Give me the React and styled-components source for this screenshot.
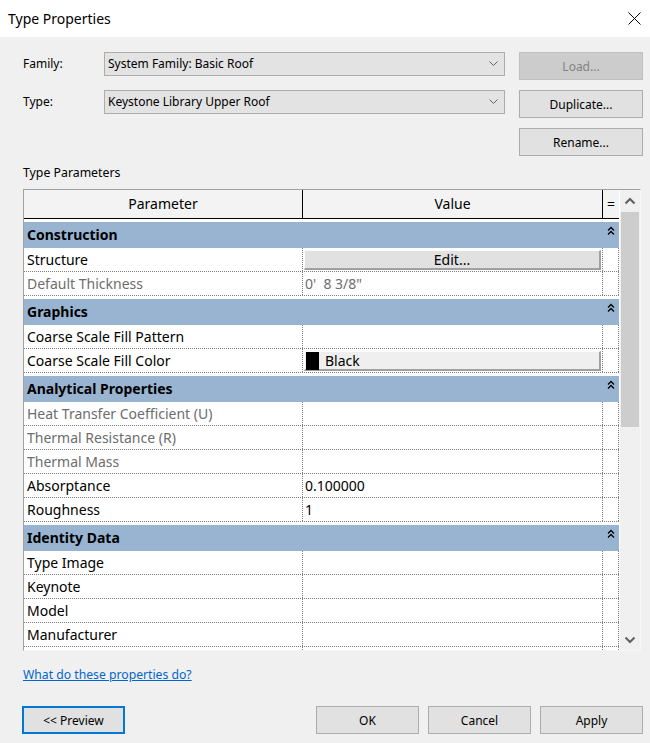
import React from 'react'
import styled, { createGlobalStyle, css } from 'styled-components'

const GlobalStyle = createGlobalStyle`
  html, body {
    margin: 0;
    padding: 0;
    background: #f0f0f0;
  }
  * { box-sizing: border-box; }
`

const UI_FONT = `"Noto Sans", "Open Sans", sans-serif`

const Dialog = styled.div`
  width: 650px;
  height: 743px;
  background: #f0f0f0;
  font-family: ${UI_FONT};
  color: #000;
  display: flex;
  flex-direction: column;
  overflow: hidden;
`

const TitleBar = styled.div`
  height: 37px;
  background: #fff;
  display: flex;
  align-items: center;
  justify-content: space-between;
  padding: 0 9px 0 8px;
  font-size: 14px;
  flex-shrink: 0;
`

const Body = styled.div`
  flex: 1;
  padding: 15px 7px 0 23px;
  display: flex;
  flex-direction: column;
`

const TopGrid = styled.div`
  display: grid;
  grid-template-columns: 81px 401px 1fr;
  grid-template-rows: 28px 28px 28px;
  row-gap: 10px;
  font-size: 12px;
`

const Label = styled.div`
  align-self: start;
  height: 24px;
  line-height: 23px;
`

const Combo = styled.div`
  align-self: start;
  height: 24px;
  background: #e3e3e3;
  border: 1px solid #adadad;
  display: flex;
  align-items: center;
  justify-content: space-between;
  padding: 0 6px 1px 3px;
`

const Btn = styled.button`
  font-family: ${UI_FONT};
  font-size: 12px;
  height: 28px;
  padding: 0;
  background: #e1e1e1;
  border: 1px solid #adadad;
  color: #000;
  ${({ disabled }) => disabled && css`
    background: #cccccc;
    border-color: #bfbfbf;
    color: #838383;
  `}
  ${({ primary }) => primary && css`
    border: 2px solid #0078d7;
  `}
`

const SideBtn = styled(Btn)`
  width: 124px;
  justify-self: end;
`

const SectionLabel = styled.div`
  font-size: 12.3px;
  line-height: 16px;
  margin-top: 9px;
`

const TableFrame = styled.div`
  margin-top: 8px;
  width: 618px;
  height: 462px;
  border: 1px solid #a0a0a0;
  border-right-color: #f6f6f6;
  border-bottom-color: #f6f6f6;
  display: flex;
  background: #fff;
`

const Grid = styled.div`
  width: 595px;
  height: 100%;
  overflow: hidden;
  font-size: 14px;
`

const HeaderRow = styled.div`
  display: grid;
  grid-template-columns: 279px 300px 16px;
  height: 29px;
  background: #f3f3f3;
  border-bottom: 1px solid #000;
`

const HeaderCell = styled.div`
  display: flex;
  align-items: center;
  justify-content: center;
  padding-bottom: 1px;
  ${({ divider }) => divider && css`border-right: 1px solid #000;`}
`

const Group = styled.div`
  margin-top: 3px;
  height: 26px;
  background: #99b4d1;
  display: flex;
  align-items: flex-start;
  justify-content: space-between;
  font-weight: 700;
`

const GroupTitle = styled.div`
  line-height: 25px;
  padding-left: 3px;
`

const GroupToggle = styled.div`
  width: 16px;
  display: flex;
  justify-content: center;
  padding-top: 4px;
`

const Row = styled.div`
  display: grid;
  grid-template-columns: 279px 300px 16px;
  height: 24px;
  border-bottom: 1px dotted #808080;
`

const Cell = styled.div`
  border-right: 1px dotted #808080;
  display: flex;
  align-items: center;
  padding-left: ${({ pad }) => pad ?? 3}px;
  padding-bottom: 1px;
  white-space: pre;
  overflow: hidden;
  color: ${({ muted }) => (muted ? '#6d6d6d' : '#000')};
`

const CellButton = styled.div`
  flex: 1;
  align-self: stretch;
  margin: 2px 1px 0 1px;
  background: ${({ light }) => (light ? '#efefef' : '#e1e1e1')};
  border-top: 1px solid #fcfcfc;
  border-left: 1px solid #fcfcfc;
  border-right: 2px solid #a0a0a0;
  border-bottom: 2px solid #a0a0a0;
  display: flex;
  align-items: center;
  justify-content: ${({ center }) => (center ? 'center' : 'flex-start')};
  gap: 6px;
  padding-left: ${({ center }) => (center ? 0 : 1)}px;
`

const Swatch = styled.span`
  width: 13px;
  height: 18px;
  background: #000;
`

const ScrollBar = styled.div`
  width: 21px;
  display: flex;
  flex-direction: column;
  background: #f0f0f0;
  border-left: 1px solid #fff;
`

const ScrollArrow = styled.div`
  height: 21px;
  display: flex;
  align-items: center;
  justify-content: center;
`

const ScrollTrack = styled.div`
  flex: 1;
  padding: 1px 1px 0 1px;
`

const Thumb = styled.div`
  height: 215px;
  background: #cdcdcd;
`

const HelpLink = styled.a`
  margin-top: 16px;
  font-size: 12.2px;
  line-height: 16px;
  color: #0066cc;
  text-decoration: underline;
  align-self: flex-start;
  cursor: pointer;
`

const Footer = styled.div`
  margin-top: 23px;
  display: flex;
  gap: 9px;
  margin-left: -1px;
`

const FooterBtn = styled(Btn)`
  width: 103px;
  ${({ push }) => push && css`margin-left: auto;`}
`

const Chevron = ({ up }) => (
  <svg width="12" height="8" viewBox="0 0 12 8">
    <path
      d={up ? 'M1.5 6.5 L6 2 L10.5 6.5' : 'M1.5 1.5 L6 6 L10.5 1.5'}
      fill="none"
      stroke="#606060"
      strokeWidth="2"
    />
  </svg>
)

const DoubleCaret = () => (
  <svg width="8" height="10" viewBox="0 0 8 10">
    <path d="M1 4.5 L4 1.5 L7 4.5 M1 8.5 L4 5.5 L7 8.5" fill="none" stroke="#000" strokeWidth="1.3" />
  </svg>
)

const ComboArrow = () => (
  <svg width="9" height="5" viewBox="0 0 9 5">
    <path d="M0.5 0.5 L4.5 4.5 L8.5 0.5" fill="none" stroke="#606060" strokeWidth="1" />
  </svg>
)

const CloseIcon = () => (
  <svg width="13" height="13" viewBox="0 0 13 13">
    <path d="M0.5 0.5 L12.5 12.5 M12.5 0.5 L0.5 12.5" stroke="#000" strokeWidth="1" />
  </svg>
)

const groups = [
  {
    title: 'Construction',
    rows: [
      { name: 'Structure', button: 'Edit...' },
      { name: 'Default Thickness', value: `0'  8 3/8"`, muted: true },
    ],
  },
  {
    title: 'Graphics',
    rows: [
      { name: 'Coarse Scale Fill Pattern' },
      { name: 'Coarse Scale Fill Color', swatch: 'Black' },
    ],
  },
  {
    title: 'Analytical Properties',
    rows: [
      { name: 'Heat Transfer Coefficient (U)', muted: true },
      { name: 'Thermal Resistance (R)', muted: true },
      { name: 'Thermal Mass', muted: true },
      { name: 'Absorptance', value: '0.100000' },
      { name: 'Roughness', value: '1' },
    ],
  },
  {
    title: 'Identity Data',
    rows: [
      { name: 'Type Image' },
      { name: 'Keynote' },
      { name: 'Model' },
      { name: 'Manufacturer' },
      { name: '' },
    ],
  },
]

const ValueCell = ({ row }) => {
  if (row.button) {
    return (
      <Cell pad={0}>
        <CellButton center>{row.button}</CellButton>
      </Cell>
    )
  }
  if (row.swatch) {
    return (
      <Cell pad={0}>
        <CellButton light>
          <Swatch />
          {row.swatch}
        </CellButton>
      </Cell>
    )
  }
  return (
    <Cell pad={2} muted={row.muted}>
      {row.value || ''}
    </Cell>
  )
}

const App = () => {
  return (
    <Dialog>
      <GlobalStyle />
      <TitleBar>
        <span>Type Properties</span>
        <CloseIcon />
      </TitleBar>
      <Body>
        <TopGrid>
          <Label>Family:</Label>
          <Combo>
            <span>System Family: Basic Roof</span>
            <ComboArrow />
          </Combo>
          <SideBtn disabled>Load...</SideBtn>

          <Label>Type:</Label>
          <Combo>
            <span>Keystone Library Upper Roof</span>
            <ComboArrow />
          </Combo>
          <SideBtn>Duplicate...</SideBtn>

          <div />
          <div />
          <SideBtn>Rename...</SideBtn>
        </TopGrid>

        <SectionLabel>Type Parameters</SectionLabel>

        <TableFrame>
          <Grid>
            <HeaderRow>
              <HeaderCell divider>Parameter</HeaderCell>
              <HeaderCell divider>Value</HeaderCell>
              <HeaderCell>=</HeaderCell>
            </HeaderRow>
            {groups.map((g) => (
              <React.Fragment key={g.title}>
                <Group>
                  <GroupTitle>{g.title}</GroupTitle>
                  <GroupToggle>
                    <DoubleCaret />
                  </GroupToggle>
                </Group>
                {g.rows.map((r, i) => (
                  <Row key={g.title + i}>
                    <Cell muted={r.muted}>{r.name}</Cell>
                    <ValueCell row={r} />
                    <Cell />
                  </Row>
                ))}
              </React.Fragment>
            ))}
          </Grid>
          <ScrollBar>
            <ScrollArrow>
              <Chevron up />
            </ScrollArrow>
            <ScrollTrack>
              <Thumb />
            </ScrollTrack>
            <ScrollArrow>
              <Chevron />
            </ScrollArrow>
          </ScrollBar>
        </TableFrame>

        <HelpLink>What do these properties do?</HelpLink>

        <Footer>
          <FooterBtn primary>&lt;&lt; Preview</FooterBtn>
          <FooterBtn push>OK</FooterBtn>
          <FooterBtn>Cancel</FooterBtn>
          <FooterBtn>Apply</FooterBtn>
        </Footer>
      </Body>
    </Dialog>
  )
}

export default App
